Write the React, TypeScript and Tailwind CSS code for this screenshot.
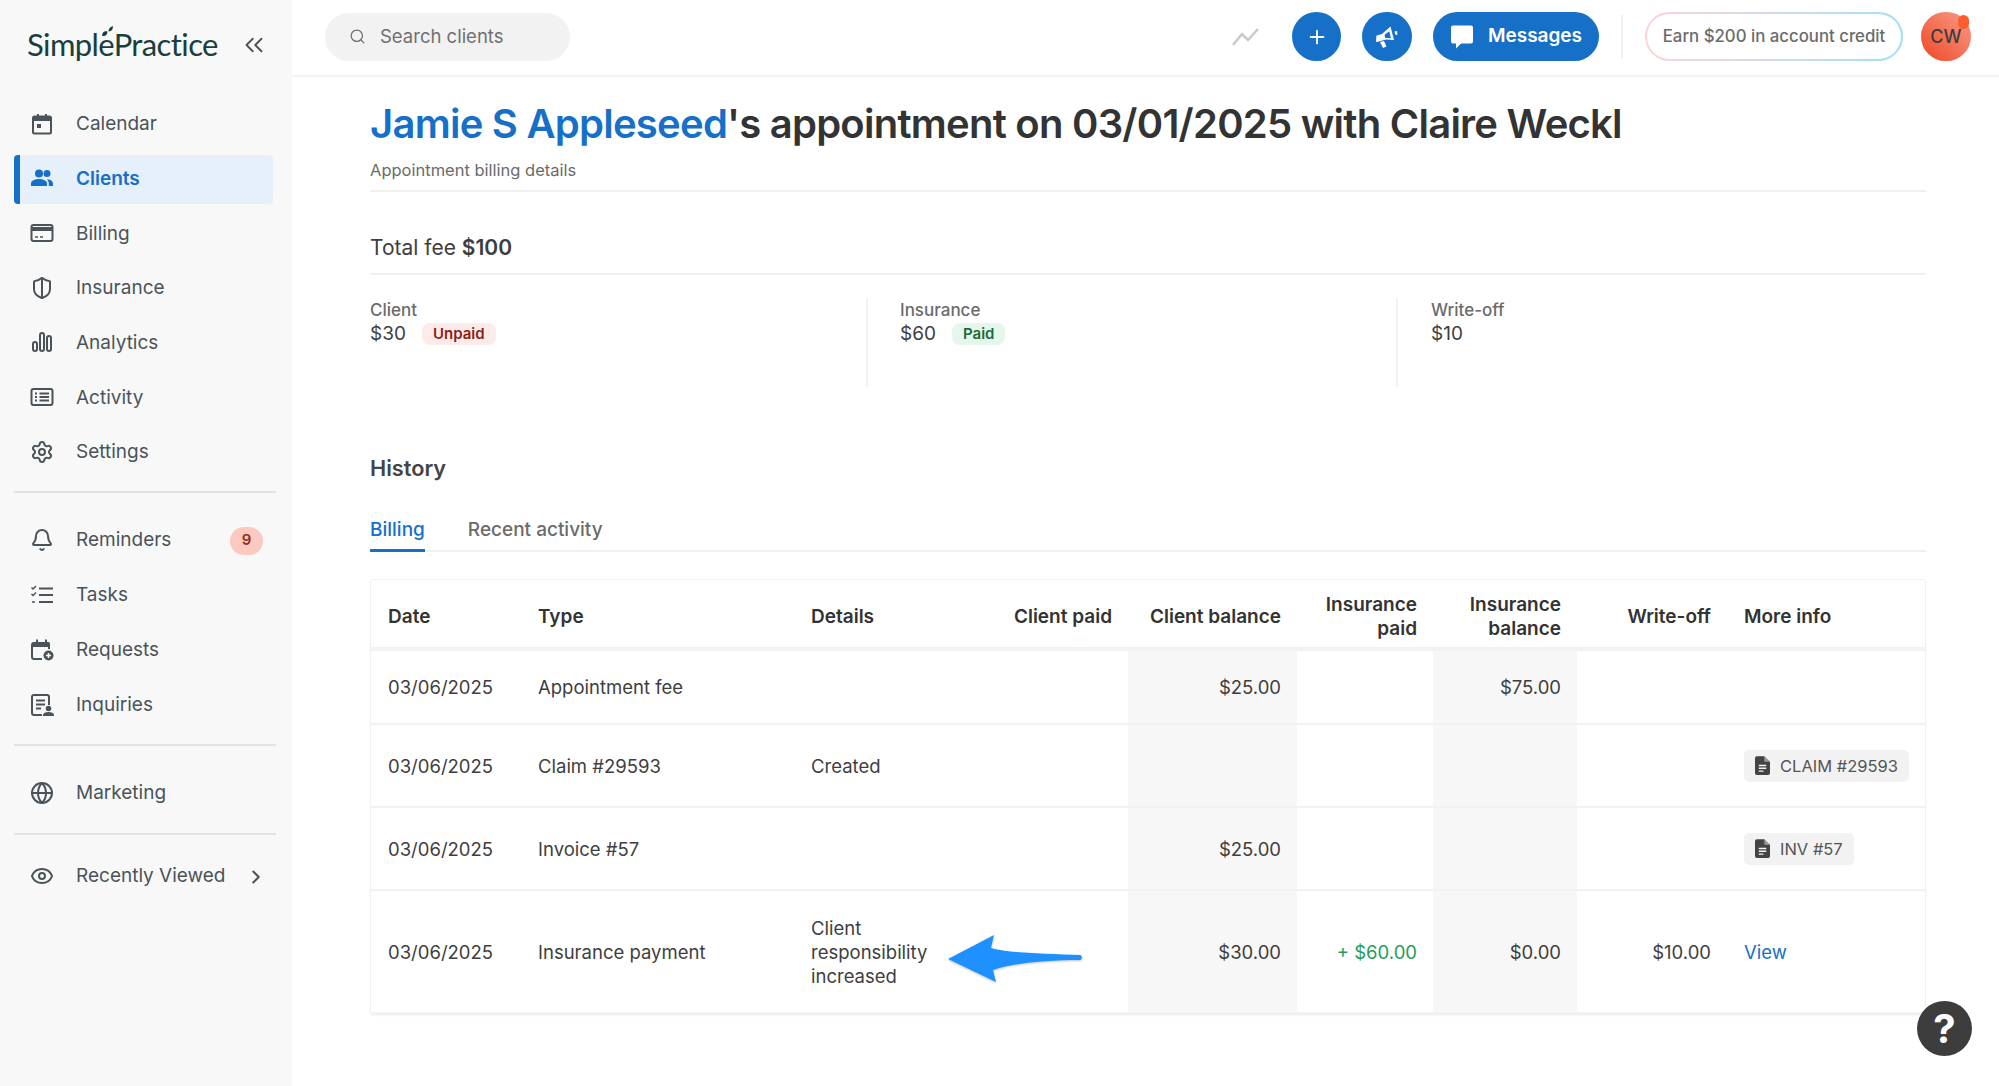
import { Bell, ChevronRight, ChevronsLeft, Eye, Globe, Plus, Search, Settings, ShieldHalf } from 'lucide-react';
import type { ReactNode } from 'react';

const iconClass = 'w-[24px] h-[24px] text-[#4a5458]';

const CalendarIcon = () => (
  <svg viewBox="0 0 24 24" className={iconClass} fill="none">
    <rect x="3" y="4.500" width="18" height="17" rx="1.500" stroke="currentColor" strokeWidth="2" />
    <path d="M3 5.500a1.500 1.500 0 0 1 1.500-1.500H7V2h2v2h6V2h2v2h2.500A1.500 1.500 0 0 1 21 5.500V9H3z" fill="currentColor" />
    <rect x="7" y="12" width="4" height="4" fill="currentColor" />
  </svg>
);

const ClientsIcon = () => (
  <svg viewBox="0 0 24 24" className="w-[24px] h-[24px] text-[#1670c8]" fill="currentColor">
    <circle cx="9" cy="7.500" r="4" />
    <circle cx="17" cy="7.500" r="3.500" />
    <path d="M1 20v-2.500C1 14.500 5 13 9 13s8 1.500 8 4.500V20z" />
    <path d="M18.800 20v-2.500c0-1.700-.8-3-2-4 3-.3 6.200 1.200 6.200 4V20z" />
  </svg>
);

const BillingIcon = () => (
  <svg viewBox="0 0 24 24" className={iconClass} fill="none">
    <rect x="1.500" y="4" width="21" height="16" rx="2" stroke="currentColor" strokeWidth="2" />
    <rect x="1.500" y="6" width="21" height="4" fill="currentColor" />
    <path d="M5 16h3M10 16h3" stroke="currentColor" strokeWidth="1.500" />
  </svg>
);

const AnalyticsIcon = () => (
  <svg viewBox="0 0 24 24" className={iconClass} fill="none" stroke="currentColor" strokeWidth="2">
    <rect x="3" y="12" width="4" height="9" rx="2" />
    <rect x="10" y="3" width="4" height="18" rx="2" />
    <rect x="17" y="6" width="4" height="15" rx="2" />
  </svg>
);

const ActivityIcon = () => (
  <svg viewBox="0 0 24 24" className={iconClass} fill="none" stroke="currentColor">
    <rect x="1.500" y="4" width="21" height="16" rx="2" strokeWidth="2" />
    <path d="M9.500 8.500H19M9.500 12H19M9.500 15.500H19" strokeWidth="1.800" />
    <path d="M5 8.500h2M5 12h2M5 15.500h2" strokeWidth="1.800" />
  </svg>
);

const TasksIcon = () => (
  <svg viewBox="0 0 24 24" className={iconClass} fill="none" stroke="currentColor" strokeWidth="2">
    <path d="M9 5.500h14M9 12h14M9 19h14" />
    <path d="M1.500 4.500 3 6l3-3M1.500 11l1.500 1.500 3-3" strokeWidth="1.500" />
    <path d="M2 19h3" strokeWidth="1.500" />
  </svg>
);

const RequestsIcon = () => (
  <svg viewBox="0 0 24 24" className={iconClass} fill="none">
    <path d="M12 21H4a2 2 0 0 1-2-2V7a2 2 0 0 1 2-2h13a2 2 0 0 1 2 2v4" stroke="currentColor" strokeWidth="2" />
    <path d="M2 6a2 2 0 0 1 2-2h2V1.500h2V4h7V1.500h2V4h1a2 2 0 0 1 2 2v3H2z" fill="currentColor" />
    <circle cx="18.500" cy="17.500" r="5" fill="currentColor" />
    <path d="M18.500 15v5M16 17.500h5" stroke="#f8f8f8" strokeWidth="1.500" />
  </svg>
);

const InquiriesIcon = () => (
  <svg viewBox="0 0 24 24" className={iconClass} fill="none">
    <path d="M12 22H4a2 2 0 0 1-2-2V4a2 2 0 0 1 2-2h13a2 2 0 0 1 2 2v8" stroke="currentColor" strokeWidth="2" />
    <path d="M6 7.500h9M6 11.500h9M6 15.500h5" stroke="currentColor" strokeWidth="1.800" />
    <circle cx="18.500" cy="15.500" r="2.800" fill="currentColor" />
    <path d="M13 23v-1c0-2 2.500-3 5.500-3s5.500 1 5.500 3v1z" fill="currentColor" />
  </svg>
);

const FileIcon = () => (
  <svg viewBox="0 0 16 20" className="w-[15px] h-[19px] text-[#444]" fill="currentColor">
    <path d="M2 0h8l6 6v12a2 2 0 0 1-2 2H2a2 2 0 0 1-2-2V2a2 2 0 0 1 2-2z" />
    <path d="M4 10h8M4 13h8M4 16h5" stroke="#f2f2f2" strokeWidth="1.500" />
    <path d="M10 0v6h6" fill="#f2f2f2" opacity="0.5" />
  </svg>
);

const MegaphoneIcon = () => (
  <svg viewBox="0 0 22 22" className="w-[22px] h-[22px] text-white" fill="currentColor">
    <path fillRule="evenodd" d="M0.500 9.500 6 8l8.500-7.500L18 14l-8-.5-9 2.500a1 1 0 0 1-1-.8zM8.500 8.800l.8 3.200 5.700.3-1.700-7z" />
    <path d="M4 16l4-1 2.500 5.500-3.500 1.500z" />
    <path d="M18.500 5.500 21 5l.5 3.500-2 .5z" />
  </svg>
);

const NavRow = ({ icon, label, active, right }: { icon: ReactNode; label: string; active?: boolean; right?: ReactNode }) => (
  <div
    className={
      active
        ? 'flex items-center h-[49px] w-[259px] ml-[14px] rounded-[4px] bg-[#e6f0fa] border-l-[6px] border-[#1670c8] pl-[16px] pr-[10px] text-[#1670c8] font-semibold'
        : 'flex items-center h-[49px] w-[259px] ml-[14px] pl-[16px] pr-[10px] border-l-[6px] border-transparent text-[#4a5458]'
    }
  >
    <span className="w-[41px] -ml-[6px] mr-[5px] -mt-[2px] flex-none flex">{icon}</span>
    <span className="flex-1 text-[19px]">{label}</span>
    {right}
  </div>
);

const Sidebar = () => (
  <aside className="w-[292px] flex-none h-full bg-[#f8f8f8] flex flex-col">
    <div className="h-[100px] flex-none pl-[27px] pt-[24px] relative">
      <span className="text-[31px] leading-[40px] tracking-[-0.6px] text-[#17403c]" style={{ fontFamily: 'Lato, sans-serif' }}>SimplePractice</span>
      <svg viewBox="0 0 12 12" className="absolute left-[101px] top-[26px] w-[13px] h-[13px] text-[#17403c]" fill="currentColor">
        <path d="M1 9c0-3 2-5 5-4 0 3-2 5-5 4zM7 5c0-2 1-4 4-5 0 3-1 5-4 5z" />
      </svg>
      <ChevronsLeft className="absolute left-[239px] top-[30px] w-[30px] h-[30px] text-[#4a5458]" strokeWidth={1.5} />
    </div>
    <nav className="flex flex-col gap-[5.700px]">
      <NavRow icon={<CalendarIcon />} label="Calendar" />
      <NavRow icon={<ClientsIcon />} label="Clients" active />
      <NavRow icon={<BillingIcon />} label="Billing" />
      <NavRow icon={<ShieldHalf className={iconClass} strokeWidth={2} />} label="Insurance" />
      <NavRow icon={<AnalyticsIcon />} label="Analytics" />
      <NavRow icon={<ActivityIcon />} label="Activity" />
      <NavRow icon={<Settings className={iconClass} strokeWidth={2} />} label="Settings" />
    </nav>
    <div className="h-[2px] bg-[#e3e3e3] w-[262px] ml-[14px] mt-[14px] mb-[23px] flex-none" />
    <nav className="flex flex-col gap-[6px]">
      <NavRow
        icon={<Bell className={iconClass} strokeWidth={2} />}
        label="Reminders"
        right={<span className="w-[33px] h-[28px] rounded-full bg-[#fbc9c0] text-[#8a2f22] text-[15px] font-semibold flex items-center justify-center">9</span>}
      />
      <NavRow icon={<TasksIcon />} label="Tasks" />
      <NavRow icon={<RequestsIcon />} label="Requests" />
      <NavRow icon={<InquiriesIcon />} label="Inquiries" />
    </nav>
    <div className="h-[2px] bg-[#e3e3e3] w-[262px] ml-[14px] mt-[14px] mb-[23px] flex-none" />
    <NavRow icon={<Globe className={iconClass} strokeWidth={2} />} label="Marketing" />
    <div className="h-[2px] bg-[#e3e3e3] w-[262px] ml-[14px] mt-[15px] mb-[17px] flex-none" />
    <NavRow
      icon={<Eye className={iconClass} strokeWidth={2} />}
      label="Recently Viewed"
      right={<ChevronRight className="w-[22px] h-[22px] text-[#4a5458] -mr-[4px]" strokeWidth={2.2} />}
    />
  </aside>
);

const TopBar = () => (
  <header className="h-[77px] flex-none border-b-2 border-[#f4f4f4] flex items-center pl-[33px] pr-[28px] pb-[2px]">
    <div className="w-[245px] h-[48px] rounded-full bg-[#f2f2f2] flex items-center pl-[24px] gap-[14px] text-[#6f6f6f]">
      <Search className="w-[17px] h-[17px]" strokeWidth={1.8} />
      <span className="text-[18.500px]">Search clients</span>
    </div>
    <div className="flex-1" />
    <svg viewBox="0 0 27 18" className="w-[27px] h-[18px] text-[#c9c9c9]" fill="none" stroke="currentColor" strokeWidth="2.500">
      <path d="M1 17 10 6l6 6L26 1" />
    </svg>
    <button className="ml-[33px] w-[49px] h-[49px] rounded-full bg-[#1670c8] flex items-center justify-center text-white">
      <Plus className="w-[22px] h-[22px]" strokeWidth={2} />
    </button>
    <button className="ml-[21px] w-[50px] h-[49px] rounded-full bg-[#1670c8] flex items-center justify-center">
      <MegaphoneIcon />
    </button>
    <button className="ml-[21px] w-[166px] h-[49px] rounded-full bg-[#1670c8] flex items-center justify-center gap-[14px] text-white text-[19px] font-semibold">
      <svg viewBox="0 0 24 24" className="w-[24px] h-[25px]" fill="currentColor">
        <path d="M3 1h18a2 2 0 0 1 2 2v14a2 2 0 0 1-2 2H11l-5 5v-5H3a2 2 0 0 1-2-2V3a2 2 0 0 1 2-2z" />
      </svg>
      Messages
    </button>
    <div className="ml-[22px] w-[2px] h-[43px] bg-[#f0f0f0]" />
    <div className="ml-[22px] w-[258px] h-[49px] rounded-full bg-gradient-to-r from-[#fcd3d6] to-[#9fe0f5] p-[2px]">
      <div className="w-full h-full rounded-full bg-white flex items-center justify-center text-[16.800px] font-medium text-[#6b6b6b]">
        Earn $200 in account credit
      </div>
    </div>
    <div className="ml-[18px] relative w-[50px] h-[49px] rounded-full bg-gradient-to-bl from-[#f79a87] to-[#ee4118] flex items-center justify-center text-[18px] font-medium text-[#3d3d3d]">
      CW
      <span className="absolute right-[2px] top-[3px] w-[11px] h-[14px] rounded-full bg-[#fb5d2c]" />
    </div>
  </header>
);

const StatCol = ({ label, value, badge, badgeClass, className }: { label: string; value: string; badge?: string; badgeClass?: string; className: string }) => (
  <div className={className}>
    <div className="text-[17px] leading-[22px] font-medium text-[#6b6b6b] mt-[1px]">{label}</div>
    <div className="flex items-center mt-[1px]">
      <span className="text-[19px] leading-[24px] text-[#3e3e3e]">{value}</span>
      {badge && <span className={`ml-[16px] h-[22px] rounded-[8px] px-[11px] flex items-center text-[15px] font-semibold ${badgeClass}`}>{badge}</span>}
    </div>
  </div>
);

const HistoryTable = () => {
  const gray = 'bg-[#f7f7f7]';
  const td = 'px-[17px] border-b-2 border-[#f2f2f2] align-middle';
  const num = 'text-right pr-[16px]';
  const th = 'px-[17px] pt-[6px] text-[19px] font-semibold leading-[24px]';
  const chip = 'inline-flex items-center gap-[10px] h-[32px] rounded-[5px] bg-[#f2f2f2] pl-[11px] pr-[11px] text-[16.500px] text-[#555] whitespace-nowrap';
  return (
    <div className="border border-[#f0f0f0] rounded-[3px] shadow-[0_1px_2px_rgba(0,0,0,0.04)]">
      <table className="w-full table-fixed text-[18.500px] leading-[24px] text-[#3e3e3e] border-collapse">
        <colgroup>
          <col className="w-[150px]" />
          <col className="w-[273px]" />
          <col className="w-[160px]" />
          <col className="w-[174px]" />
          <col className="w-[169px]" />
          <col className="w-[136px]" />
          <col className="w-[144px]" />
          <col className="w-[150px]" />
          <col />
        </colgroup>
        <thead>
          <tr className="h-[69px] border-b-4 border-[#f2f2f2] text-[#333]">
            <th className={`${th} text-left`}>Date</th>
            <th className={`${th} text-left`}>Type</th>
            <th className={`${th} text-left`}>Details</th>
            <th className={`${th} ${num}`}>Client paid</th>
            <th className={`${th} ${num}`}>Client balance</th>
            <th className={`${th} ${num}`}>Insurance paid</th>
            <th className={`${th} ${num}`}>Insurance balance</th>
            <th className={`${th} ${num}`}>Write-off</th>
            <th className={`${th} text-left`}>More info</th>
          </tr>
        </thead>
        <tbody>
          <tr className="h-[75px]">
            <td className={td}>03/06/2025</td>
            <td className={td}>Appointment fee</td>
            <td className={td} />
            <td className={td} />
            <td className={`${td} ${gray} ${num}`}>$25.00</td>
            <td className={td} />
            <td className={`${td} ${gray} ${num}`}>$75.00</td>
            <td className={td} />
            <td className={td} />
          </tr>
          <tr className="h-[83px]">
            <td className={td}>03/06/2025</td>
            <td className={td}>Claim #29593</td>
            <td className={td}>Created</td>
            <td className={td} />
            <td className={`${td} ${gray}`} />
            <td className={td} />
            <td className={`${td} ${gray}`} />
            <td className={td} />
            <td className={td}>
              <span className={chip}>
                <FileIcon />
                CLAIM #29593
              </span>
            </td>
          </tr>
          <tr className="h-[83px]">
            <td className={td}>03/06/2025</td>
            <td className={td}>Invoice #57</td>
            <td className={td} />
            <td className={td} />
            <td className={`${td} ${gray} ${num}`}>$25.00</td>
            <td className={td} />
            <td className={`${td} ${gray}`} />
            <td className={td} />
            <td className={td}>
              <span className={chip}>
                <FileIcon />
                INV #57
              </span>
            </td>
          </tr>
          <tr className="h-[123px]">
            <td className={td}>03/06/2025</td>
            <td className={td}>Insurance payment</td>
            <td className={td}>Client responsibility increased</td>
            <td className={td} />
            <td className={`${td} ${gray} ${num}`}>$30.00</td>
            <td className={`${td} ${num} text-[#1f9d5c]`}>+ $60.00</td>
            <td className={`${td} ${gray} ${num}`}>$0.00</td>
            <td className={`${td} ${num}`}>$10.00</td>
            <td className={`${td} text-[#1670c8]`}>View</td>
          </tr>
        </tbody>
      </table>
    </div>
  );
};

export default function App() {
  return (
    <div className="relative w-full h-screen overflow-hidden flex bg-white" style={{ fontFamily: 'Inter, sans-serif' }}>
      <Sidebar />
      <div className="flex-1 min-w-0 flex flex-col">
        <TopBar />
        <main className="pl-[78px] pr-[73px]">
          <h1 className="mt-[21px] text-[40px] leading-[52px] font-semibold tracking-[-0.75px] text-[#333] whitespace-nowrap">
            <span className="text-[#1670c8]">Jamie S Appleseed</span>'s appointment on 03/01/2025 with Claire Weckl
          </h1>
          <p className="mt-[8px] text-[16.500px] leading-[24px] text-[#6b6b6b]">Appointment billing details</p>
          <div className="mt-[8px] h-[2px] bg-[#f0f0f0]" />
          <div className="mt-[40px] text-[21px] leading-[32px] text-[#3e3e3e]">
            Total fee <span className="font-semibold">$100</span>
          </div>
          <div className="mt-[9px] h-[2px] bg-[#f0f0f0]" />
          <div className="mt-[23px] flex h-[89px]">
            <StatCol label="Client" value="$30" badge="Unpaid" badgeClass="bg-[#fdeaea] text-[#8a1f12]" className="w-[496px]" />
            <StatCol label="Insurance" value="$60" badge="Paid" badgeClass="bg-[#e5f6ec] text-[#1a6b3a]" className="w-[530px] pl-[32px] border-l-2 border-[#f2f2f2]" />
            <StatCol label="Write-off" value="$10" className="flex-1 pl-[33px] border-l-2 border-[#f2f2f2]" />
          </div>
          <h2 className="mt-[65px] text-[21.700px] leading-[32px] font-semibold text-[#444]">History</h2>
          <div className="mt-[26px] h-[42px] border-b-2 border-[#f0f0f0] flex gap-[43px] text-[19px]">
            <span className="h-[42px] border-b-[3px] border-[#1670c8] font-medium text-[#1670c8] leading-[40px]">Billing</span>
            <span className="font-medium text-[#6b6b6b] leading-[40px]">Recent activity</span>
          </div>
          <div className="mt-[27px]">
            <HistoryTable />
          </div>
        </main>
      </div>
      <svg viewBox="0 0 134 47" className="absolute left-[948px] top-[935px] w-[134px] h-[47px] drop-shadow-[0_1px_1px_rgba(0,0,0,0.25)]">
        <path d="M0 24 46 0l-3 13c17 5 57 6 89 7 2.500.5 2.500 4.500 0 5-32 0-67 3-87 10l3 12z" fill="#1e90ff" />
      </svg>
      <button className="absolute left-[1917px] top-[1001px] w-[55px] h-[55px] rounded-full bg-[#3d3d3d] text-white text-[40px] font-bold flex items-center justify-center">?</button>
    </div>
  );
}
